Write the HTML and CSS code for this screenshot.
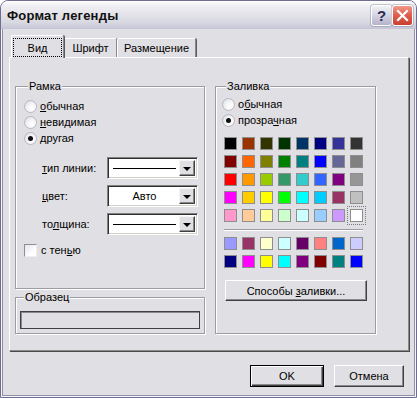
FILE: index.html
```html
<!DOCTYPE html>
<html lang="ru">
<head>
    <meta charset="UTF-8">
    <title>Формат легенды</title>
    <link rel="stylesheet" href="styles.css">
</head>
<body>
    <div class="window">
        <div class="titlebar">
            <span class="title">Формат легенды</span>
            <div class="caption-buttons">
                <div class="cap-btn help">?</div>
                <div class="cap-btn close">
                    <svg width="19" height="19" viewBox="0 0 19 19">
                        <path d="M5 5 L14 14 M14 5 L5 14" stroke="#fff" stroke-width="2.2" stroke-linecap="square"/>
                    </svg>
                </div>
            </div>
        </div>

        <div class="client">
            <div class="tabs">
                <div class="tab active"><span class="focus">Вид</span></div>
                <div class="tab">Шрифт</div>
                <div class="tab wide">Размещение</div>
            </div>

            <div class="panel">
                <div class="col-left">
                    <fieldset class="group frame">
                        <legend>Рамка</legend>
                        <div class="option"><span class="radio"></span><span><u>о</u>бычная</span></div>
                        <div class="option"><span class="radio"></span><span><u>н</u>евидимая</span></div>
                        <div class="option"><span class="radio checked"></span><span>другая</span></div>

                        <div class="combo-list">
                            <div class="combo-row">
                                <span class="combo-label"><u>т</u>ип линии:</span>
                                <div class="combo"><span class="combo-value"><span class="line-sample"></span></span><span class="combo-btn"></span></div>
                            </div>
                            <div class="combo-row">
                                <span class="combo-label"><u>ц</u>вет:</span>
                                <div class="combo"><span class="combo-value centered">Авто</span><span class="combo-btn"></span></div>
                            </div>
                            <div class="combo-row">
                                <span class="combo-label">то<u>л</u>щина:</span>
                                <div class="combo"><span class="combo-value"><span class="line-sample"></span></span><span class="combo-btn"></span></div>
                            </div>
                        </div>

                        <div class="option shadow-opt"><span class="checkbox"></span><span>с тен<u>ь</u>ю</span></div>
                    </fieldset>

                    <fieldset class="group sample">
                        <legend>Образец</legend>
                        <div class="sample-box"></div>
                    </fieldset>
                </div>

                <fieldset class="group fill">
                    <legend>Заливка</legend>
                    <div class="option"><span class="radio"></span><span>о<u>б</u>ычная</span></div>
                    <div class="option"><span class="radio checked"></span><span>прозра<u>ч</u>ная</span></div>

                    <div class="palette main">
                        <span class="swatch" style="background:#000000"></span>
                        <span class="swatch" style="background:#993300"></span>
                        <span class="swatch" style="background:#333300"></span>
                        <span class="swatch" style="background:#003300"></span>
                        <span class="swatch" style="background:#003366"></span>
                        <span class="swatch" style="background:#000080"></span>
                        <span class="swatch" style="background:#333399"></span>
                        <span class="swatch" style="background:#333333"></span>

                        <span class="swatch" style="background:#800000"></span>
                        <span class="swatch" style="background:#ff6600"></span>
                        <span class="swatch" style="background:#808000"></span>
                        <span class="swatch" style="background:#008000"></span>
                        <span class="swatch" style="background:#008080"></span>
                        <span class="swatch" style="background:#0000ff"></span>
                        <span class="swatch" style="background:#666699"></span>
                        <span class="swatch" style="background:#808080"></span>

                        <span class="swatch" style="background:#ff0000"></span>
                        <span class="swatch" style="background:#ff9900"></span>
                        <span class="swatch" style="background:#99cc00"></span>
                        <span class="swatch" style="background:#339966"></span>
                        <span class="swatch" style="background:#33cccc"></span>
                        <span class="swatch" style="background:#3366ff"></span>
                        <span class="swatch" style="background:#800080"></span>
                        <span class="swatch" style="background:#969696"></span>

                        <span class="swatch" style="background:#ff00ff"></span>
                        <span class="swatch" style="background:#ffcc00"></span>
                        <span class="swatch" style="background:#ffff00"></span>
                        <span class="swatch" style="background:#00ff00"></span>
                        <span class="swatch" style="background:#00ffff"></span>
                        <span class="swatch" style="background:#00ccff"></span>
                        <span class="swatch" style="background:#993366"></span>
                        <span class="swatch" style="background:#c0c0c0"></span>

                        <span class="swatch" style="background:#ff99cc"></span>
                        <span class="swatch" style="background:#ffcc99"></span>
                        <span class="swatch" style="background:#ffff99"></span>
                        <span class="swatch" style="background:#ccffcc"></span>
                        <span class="swatch" style="background:#ccffff"></span>
                        <span class="swatch" style="background:#99ccff"></span>
                        <span class="swatch" style="background:#cc99ff"></span>
                        <span class="swatch selected" style="background:#ffffff"></span>
                    </div>

                    <div class="separator"></div>

                    <div class="palette">
                        <span class="swatch" style="background:#9999ff"></span>
                        <span class="swatch" style="background:#993366"></span>
                        <span class="swatch" style="background:#ffffcc"></span>
                        <span class="swatch" style="background:#ccffff"></span>
                        <span class="swatch" style="background:#660066"></span>
                        <span class="swatch" style="background:#ff8080"></span>
                        <span class="swatch" style="background:#0066cc"></span>
                        <span class="swatch" style="background:#ccccff"></span>

                        <span class="swatch" style="background:#000080"></span>
                        <span class="swatch" style="background:#ff00ff"></span>
                        <span class="swatch" style="background:#ffff00"></span>
                        <span class="swatch" style="background:#00ffff"></span>
                        <span class="swatch" style="background:#800080"></span>
                        <span class="swatch" style="background:#800000"></span>
                        <span class="swatch" style="background:#008080"></span>
                        <span class="swatch" style="background:#0000ff"></span>
                    </div>

                    <div class="btn fill-btn"><span>Способы <u>з</u>аливки...</span></div>
                </fieldset>
            </div>

            <div class="buttons">
                <div class="btn default">OK</div>
                <div class="btn cancel">Отмена</div>
            </div>
        </div>
    </div>
</body>
</html>
```

FILE: styles.css
```css
:root {
    --face: #e0dfe3;
    --etch: #9d9ca3;
    --frame-dark: #6f6e8e;
    --frame-mid: #9190ab;
}

* {
    margin: 0;
    padding: 0;
    box-sizing: border-box;
}

body {
    width: 417px;
    height: 398px;
    overflow: hidden;
    background: #ffffff;
    font-family: "Liberation Sans", Arial, sans-serif;
    font-size: 11px;
    color: #000;
}

u {
    text-decoration: underline;
    text-underline-offset: 1px;
}

.window {
    width: 417px;
    height: 398px;
    display: flex;
    flex-direction: column;
    border: 1px solid var(--frame-dark);
    border-radius: 8px 8px 0 0;
    overflow: hidden;
    background: var(--face);
}

/* title bar */

.titlebar {
    height: 28px;
    display: flex;
    align-items: center;
    padding: 0 3px 0 6px;
    background: linear-gradient(to bottom, #ffffff 0%, #f0f0f4 15%, #e4e4ea 45%, #d9d9e2 75%, #c6c5d5 100%);
}

.title {
    flex: 1;
    font-size: 13px;
    font-weight: bold;
    letter-spacing: 0.2px;
    color: #111;
}

.caption-buttons {
    display: flex;
}

.cap-btn {
    width: 21px;
    height: 21px;
    border: 1px solid #fff;
    border-radius: 3px;
    display: flex;
    align-items: center;
    justify-content: center;
    box-shadow: 0 0 0 1px rgba(110, 110, 140, 0.35);
}

.help {
    background: linear-gradient(to bottom, #f2f2f8 0%, #d4d3e3 50%, #b3b2ca 100%);
    font-size: 15px;
    font-weight: bold;
    color: #2a2a4a;
}

.close {
    background: linear-gradient(to bottom, #f09a8c 0%, #e0604f 45%, #c8402f 100%);
}

/* client area */

.client {
    flex: 1;
    display: flex;
    flex-direction: column;
    padding: 6px 0 0 7px;
    border: solid #f5f5f8;
    border-width: 0 1px 1px;
    box-shadow: inset 1px 0 var(--frame-mid), inset -1px 0 var(--frame-mid), inset 0 -1px var(--frame-mid);
}

.tabs {
    height: 22px;
    display: flex;
    align-items: flex-end;
    margin-left: 2px;
}

.tab {
    width: 53px;
    height: 19px;
    display: flex;
    align-items: center;
    justify-content: center;
    border: 1px solid #fff;
    border-bottom: none;
    border-right-color: #8a8a8a;
    border-radius: 2px 2px 0 0;
    box-shadow: 1px 0 #5a5a5a;
}

.tab.wide {
    width: 79px;
}

.tab.active {
    height: 23px;
    margin-bottom: -1px;
    position: relative;
    z-index: 1;
    background: var(--face);
}

.focus {
    width: 47px;
    height: 17px;
    display: flex;
    align-items: center;
    justify-content: center;
    outline: 1px dotted #000;
    margin-top: 1px;
}

.panel {
    width: 400px;
    height: 294px;
    display: flex;
    gap: 10px;
    padding: 22px 0 16px 5px;
    border: 1px solid #fff;
    border-right-color: #8a8a8a;
    border-bottom-color: #8a8a8a;
    box-shadow: 1px 1px 0 #4a4a4a;
}

.col-left {
    width: 190px;
    display: flex;
    flex-direction: column;
    gap: 2px;
}

/* group boxes */

.group {
    min-width: 0;
    border: 1px solid var(--etch);
    box-shadow: inset 1px 1px #fff, 1px 1px #fff;
}

.group legend {
    margin-left: 4px;
    padding: 0 1px;
    line-height: 13px;
    background: var(--face);
}

.frame {
    flex: 1;
    padding: 5px 0 0 8px;
}

.sample {
    padding: 7px 4px 4px 4px;
}

.sample-box {
    height: 18px;
    border: 1px solid #404040;
    box-shadow: inset 1px 1px #8a8a8a;
}

.fill {
    width: 161px;
    padding: 3px 0 0 6px;
}

/* radios and check boxes */

.option {
    height: 16px;
    display: flex;
    align-items: center;
}

.radio {
    width: 13px;
    height: 13px;
    margin-right: 3px;
    border-radius: 50%;
    border: 1px solid #b9b8c2;
    background: radial-gradient(circle at 65% 65%, #ffffff 0%, #f4f4f6 45%, #d6d5dc 100%);
    display: flex;
    align-items: center;
    justify-content: center;
}

.radio.checked::after {
    content: "";
    width: 5px;
    height: 5px;
    border-radius: 50%;
    background: #111;
}

.checkbox {
    width: 13px;
    height: 13px;
    margin-right: 4px;
    border: 1px solid;
    border-color: #8d8c98 #eeeef2 #eeeef2 #8d8c98;
    background: linear-gradient(135deg, #e6e5eb 0%, #ffffff 70%);
}

.shadow-opt {
    margin-top: 7px;
}

/* combo boxes */

.combo-list {
    margin-top: 11px;
    display: flex;
    flex-direction: column;
    gap: 6px;
}

.combo-row {
    display: flex;
    align-items: center;
    padding-left: 18px;
}

.combo-label {
    width: 65px;
}

.combo {
    width: 91px;
    height: 22px;
    display: flex;
    padding: 2px;
    background: #fff;
    border: 1px solid;
    border-color: #808080 #ffffff #ffffff #808080;
    box-shadow: inset 1px 1px #303030, inset -1px -1px #d4d0c8;
}

.combo-value {
    flex: 1;
    display: flex;
    align-items: center;
    padding-left: 3px;
}

.combo-value.centered {
    justify-content: center;
    padding-left: 0;
}

.line-sample {
    width: 63px;
    height: 1px;
    background: #000;
}

.combo-btn {
    width: 16px;
    height: 16px;
    display: flex;
    align-items: center;
    justify-content: center;
    background: var(--face);
    border: 1px solid;
    border-color: #f4f4f4 #404040 #404040 #f4f4f4;
    box-shadow: inset -1px -1px #8a8a8a;
}

.combo-btn::after {
    content: "";
    border-left: 4px solid transparent;
    border-right: 4px solid transparent;
    border-top: 4px solid #000;
    margin-top: 1px;
}

/* palette */

.palette {
    display: grid;
    grid-template-columns: repeat(8, 13px);
    gap: 5px;
    margin-left: 2px;
}

.palette.main {
    margin-top: 9px;
}

.swatch {
    width: 13px;
    height: 13px;
    border: 1px solid #8e8e8e;
}

.swatch.selected {
    outline: 1px dotted #7a7a7a;
    outline-offset: 2px;
}

.separator {
    width: 139px;
    height: 2px;
    margin: 7px 0 6px 2px;
    border-top: 1px solid #9d9ca3;
    border-bottom: 1px solid #fff;
}

/* push buttons */

.btn {
    display: flex;
    align-items: center;
    justify-content: center;
    height: 22px;
    background: var(--face);
    border: 1px solid;
    border-color: #ffffff #404040 #404040 #ffffff;
    box-shadow: inset -1px -1px #8a8a8a;
}

.fill-btn {
    width: 142px;
    height: 21px;
    margin: 12px 0 0 3px;
}

.buttons {
    display: flex;
    justify-content: flex-end;
    gap: 10px;
    padding: 14px 11px 0 0;
}

.btn.default {
    width: 74px;
    border-color: #000;
    box-shadow: inset 1px 1px #fff, inset -1px -1px #404040, inset -2px -2px #8a8a8a;
}

.btn.cancel {
    width: 70px;
}
```
